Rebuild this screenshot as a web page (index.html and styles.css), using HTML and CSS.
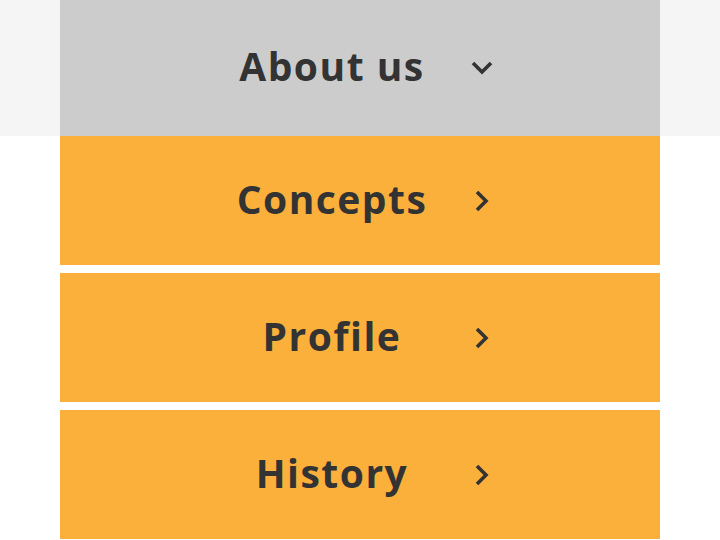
FILE: index.html
```html
<!DOCTYPE html>
<html lang="en">
<head>
  <meta charset="UTF-8">
  <title>About us</title>
  <link rel="stylesheet" href="styles.css">
</head>
<body>
<div class="band">
  <div class="wrap">
    <a class="menu-head" href="#">
      <span class="label">About us</span>
      <svg class="icon down" width="22" height="14" viewBox="0 0 22 14"><path d="M2 2 L11 11 L20 2" fill="none" stroke="#333" stroke-width="3.6"/></svg>
    </a>
  </div>
</div>
<div class="wrap">
  <ul class="menu">
    <li><a href="#"><span class="label">Concepts</span><svg class="icon" width="14" height="22" viewBox="0 0 14 22"><path d="M2 2 L11 11 L2 20" fill="none" stroke="#333" stroke-width="3.6"/></svg></a></li>
    <li><a href="#"><span class="label">Profile</span><svg class="icon" width="14" height="22" viewBox="0 0 14 22"><path d="M2 2 L11 11 L2 20" fill="none" stroke="#333" stroke-width="3.6"/></svg></a></li>
    <li><a href="#"><span class="label">History</span><svg class="icon" width="14" height="22" viewBox="0 0 14 22"><path d="M2 2 L11 11 L2 20" fill="none" stroke="#333" stroke-width="3.6"/></svg></a></li>
  </ul>
</div>
</body>
</html>
```

FILE: styles.css
```css
* {
  margin: 0;
  padding: 0
}

ul {
  list-style: none
}

body {
  font-family: "Open Sans", "Noto Sans", sans-serif;
  background-color: #fff;
}

a {
  text-decoration: none;
  color: #333;
}

.band {
  background-color: #f5f5f5;
}

.wrap {
  width: 600px;
  margin: 0 auto;
}

.menu-head,
.menu a {
  display: grid;
  grid-template-columns: 400px 44px 1fr;
  align-items: center;
}

.menu-head {
  height: 136px;
  background-color: #ccc;
}

.menu li {
  margin-bottom: 8px;
}

.menu a {
  height: 129px;
  background-color: #fbb03b;
}

.label {
  grid-row: 1;
  grid-column: 1 / -1;
  padding-right: 56px;
  padding-bottom: 5px;
  text-align: center;
  font-size: 39px;
  font-weight: 700;
  letter-spacing: 1.5px;
  line-height: 1;
}

.icon {
  grid-row: 1;
  grid-column: 2;
  justify-self: center;
  display: block;
}
```
